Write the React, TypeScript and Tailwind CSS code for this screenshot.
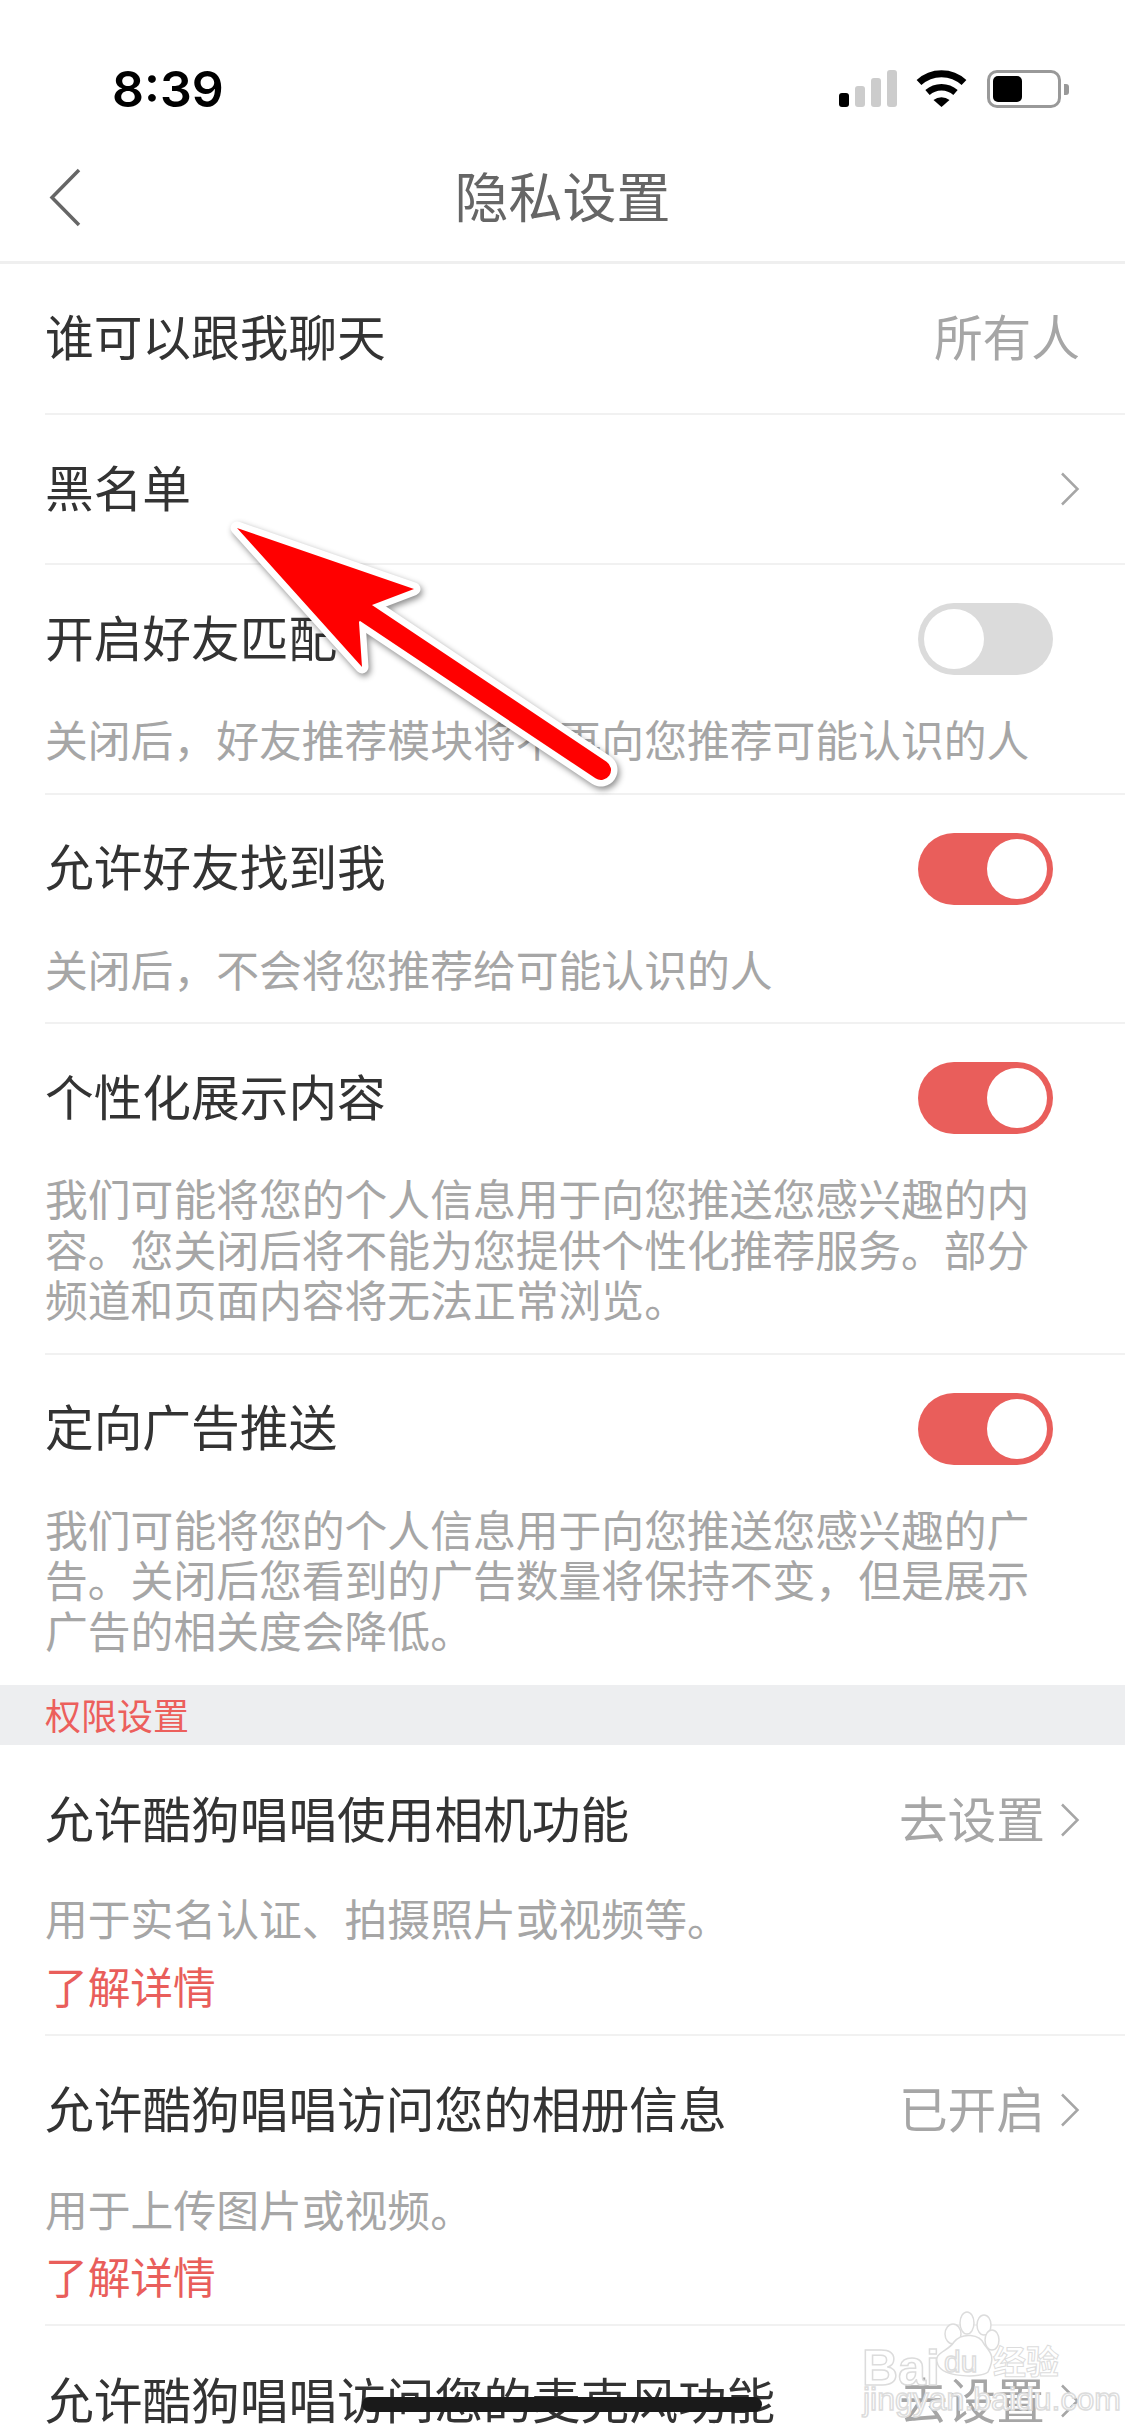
function Chevron() {
  return (
    <svg width="20" height="34" viewBox="0 0 20 34" fill="none" className="shrink-0">
      <path d="M2 1.5 L17.5 17 L2 32.5" stroke="#a6a6a6" strokeWidth="2.5" />
    </svg>
  );
}

function Toggle({ on }: { on: boolean }) {
  return (
    <div
      className={`mr-[72px] flex h-[72px] w-[135px] shrink-0 rounded-full p-[6px] ${
        on ? 'justify-end bg-[#e95e5b]' : 'justify-start bg-[#dbdbdb]'
      }`}
    >
      <div className="h-[60px] w-[60px] rounded-full bg-white" />
    </div>
  );
}

function Title({ children, muted }: { children: React.ReactNode; muted?: boolean }) {
  return <span className={`mb-[5px] text-[48.7px] ${muted ? 'text-[#a6a6a6]' : 'text-[#333333]'}`}>{children}</span>;
}

function Desc({ children }: { children: React.ReactNode }) {
  return <p className="w-[995px] text-[42.8px] leading-[50.5px] text-[#a6a6a6]">{children}</p>;
}

function ToggleRow({ title, on, desc, last }: { title: string; on: boolean; desc: string; last?: boolean }) {
  return (
    <div className={`ml-[45px] border-b-2 pb-[29px] ${last ? 'border-transparent' : 'border-[#f1f1f1]'}`}>
      <div className="flex h-[148px] items-center justify-between">
        <Title>{title}</Title>
        <Toggle on={on} />
      </div>
      <Desc>{desc}</Desc>
    </div>
  );
}

function PermissionRow({ title, value, desc }: { title: string; value: string; desc?: string }) {
  return (
    <div className="ml-[45px] border-b-2 border-[#f1f1f1] pb-[23px]">
      <div className="flex h-[147px] items-center justify-between pr-[45px] pt-[3px]">
        <Title>{title}</Title>
        <div className="flex items-center gap-[15px]">
          <Title muted>{value}</Title>
          <Chevron />
        </div>
      </div>
      {desc && (
        <>
          <Desc>{desc}</Desc>
          <p className="mt-[17px] text-[42.7px] leading-[51px] text-[#e95e5b]">了解详情</p>
        </>
      )}
    </div>
  );
}

function StatusBar() {
  return (
    <div className="flex h-[132px] items-start justify-between pl-[112px] pr-[56px] pt-[60px]">
      <span className="font-['Inter'] text-[50px] font-semibold leading-[58px] text-black">8:39</span>
      <div className="flex pt-[10px]">
        <div className="flex h-[37px] items-end gap-[6px]">
          <div className="h-[14px] w-[10px] rounded-[3px] bg-black" />
          <div className="h-[21px] w-[10px] rounded-[3px] bg-[#cccccc]" />
          <div className="h-[29px] w-[10px] rounded-[3px] bg-[#cccccc]" />
          <div className="h-[37px] w-[10px] rounded-[3px] bg-[#cccccc]" />
        </div>
        <svg width="51" height="37" viewBox="0 0 51 37" className="ml-[19px]">
          <path d="M3 12.5 A 33 33 0 0 1 48 12.5" fill="none" stroke="#000" strokeWidth="7" />
          <path d="M11.5 22.5 A 21 21 0 0 1 39.5 22.5" fill="none" stroke="#000" strokeWidth="6.5" />
          <path d="M25.5 37 L17.5 30 A 13 13 0 0 1 33.5 30 Z" fill="#000" />
        </svg>
        <div className="ml-[20px] flex items-center">
          <div className="flex h-[38px] w-[74px] rounded-[10px] border-[3px] border-[#999999] p-[3px]">
            <div className="w-[29px] rounded-[5px] bg-black" />
          </div>
          <div className="ml-[3px] h-[11px] w-[5px] rounded-r-[3px] bg-[#999999]" />
        </div>
      </div>
    </div>
  );
}

function Arrow() {
  const head = '237,528 414,589 372,605 359,622 362,667';
  return (
    <svg
      width="1125"
      height="2436"
      viewBox="0 0 1125 2436"
      fill="none"
      className="pointer-events-none absolute left-0 top-0 drop-shadow-[2px_3px_3px_rgba(0,0,0,0.45)]"
    >
      <polygon points={head} fill="#fff" stroke="#fff" strokeWidth="13" strokeLinejoin="round" />
      <line x1="366" y1="613" x2="601" y2="770" stroke="#fff" strokeWidth="33" strokeLinecap="round" />
      <polygon points={head} fill="#ff0000" />
      <line x1="366" y1="613" x2="601" y2="770" stroke="#ff0000" strokeWidth="20" strokeLinecap="round" />
    </svg>
  );
}

function Watermark() {
  const outline = 'text-white [-webkit-text-stroke:1.5px_#dcdcdc] font-["Liberation_Sans"]';
  return (
    <div className="pointer-events-none absolute left-[860px] top-[2310px] h-[110px] w-[210px]">
      <span className={`absolute left-[2px] top-[33px] text-[50px] font-bold leading-[50px] ${outline}`}>Bai</span>
      <svg width="70" height="70" viewBox="0 0 70 70" className="absolute left-[70px] top-[0px]">
        <g fill="#fff" stroke="#dcdcdc" strokeWidth="1.5">
          <ellipse cx="23" cy="24" rx="8" ry="10" />
          <ellipse cx="37" cy="13" rx="7" ry="11" />
          <ellipse cx="54" cy="15" rx="7" ry="10" />
          <ellipse cx="62" cy="30" rx="7" ry="10" />
          <path d="M8 55 C2 42 18 42 24 32 C32 22 50 24 54 34 C60 42 66 46 58 62 C52 68 14 68 8 55 Z" />
        </g>
      </svg>
      <span className={`absolute left-[84px] top-[36px] text-[30px] leading-[32px] ${outline}`}>du</span>
      <span className="absolute left-[133px] top-[32px] font-['Noto_Sans_CJK_SC'] text-[33px] font-bold leading-[36px] text-white [-webkit-text-stroke:1px_#dcdcdc]">
        经验
      </span>
      <span className={`absolute left-[3px] top-[71px] whitespace-nowrap text-[32px] leading-[36px] ${outline}`}>
        jingyan.baidu.com
      </span>
    </div>
  );
}

export default function App() {
  return (
    <div className="relative h-[2436px] w-[1125px] overflow-hidden bg-white font-['Noto_Sans_CJK_SC',sans-serif]">
      <StatusBar />

      <div className="relative flex h-[132px] items-center justify-center border-b-[3px] border-[#efefef]">
        <svg width="36" height="60" viewBox="0 0 36 60" fill="none" className="absolute left-[48px] top-[36px]">
          <path d="M31 2 L4 29.5 L31 57" stroke="#666666" strokeWidth="3.5" />
        </svg>
        <span className="mb-[4px] text-[54px] text-[#666666]">隐私设置</span>
      </div>

      <div className="ml-[45px] flex h-[151px] items-center justify-between border-b-2 border-[#f1f1f1] pr-[45px]">
        <Title>谁可以跟我聊天</Title>
        <Title muted>所有人</Title>
      </div>
      <div className="ml-[45px] flex h-[150px] items-center justify-between border-b-2 border-[#f1f1f1] pr-[45px]">
        <Title>黑名单</Title>
        <Chevron />
      </div>

      <ToggleRow title="开启好友匹配" on={false} desc="关闭后，好友推荐模块将不再向您推荐可能认识的人" />
      <ToggleRow title="允许好友找到我" on desc="关闭后，不会将您推荐给可能认识的人" />
      <ToggleRow
        title="个性化展示内容"
        on
        desc="我们可能将您的个人信息用于向您推送您感兴趣的内容。您关闭后将不能为您提供个性化推荐服务。部分频道和页面内容将无法正常浏览。"
      />
      <ToggleRow
        title="定向广告推送"
        on
        last
        desc="我们可能将您的个人信息用于向您推送您感兴趣的广告。关闭后您看到的广告数量将保持不变，但是展示广告的相关度会降低。"
      />

      <div className="flex h-[60px] items-center bg-[#edeef0] pl-[45px] text-[36px] text-[#ec5f5c]">
        <span className="mb-[3px]">权限设置</span>
      </div>

      <PermissionRow title="允许酷狗唱唱使用相机功能" value="去设置" desc="用于实名认证、拍摄照片或视频等。" />
      <PermissionRow title="允许酷狗唱唱访问您的相册信息" value="已开启" desc="用于上传图片或视频。" />
      <PermissionRow title="允许酷狗唱唱访问您的麦克风功能" value="去设置" />

      <Arrow />
      <Watermark />
      <div className="absolute left-[362px] top-[2397px] h-[15px] w-[400px] rounded-full bg-[#1a1a1a]" />
    </div>
  );
}
